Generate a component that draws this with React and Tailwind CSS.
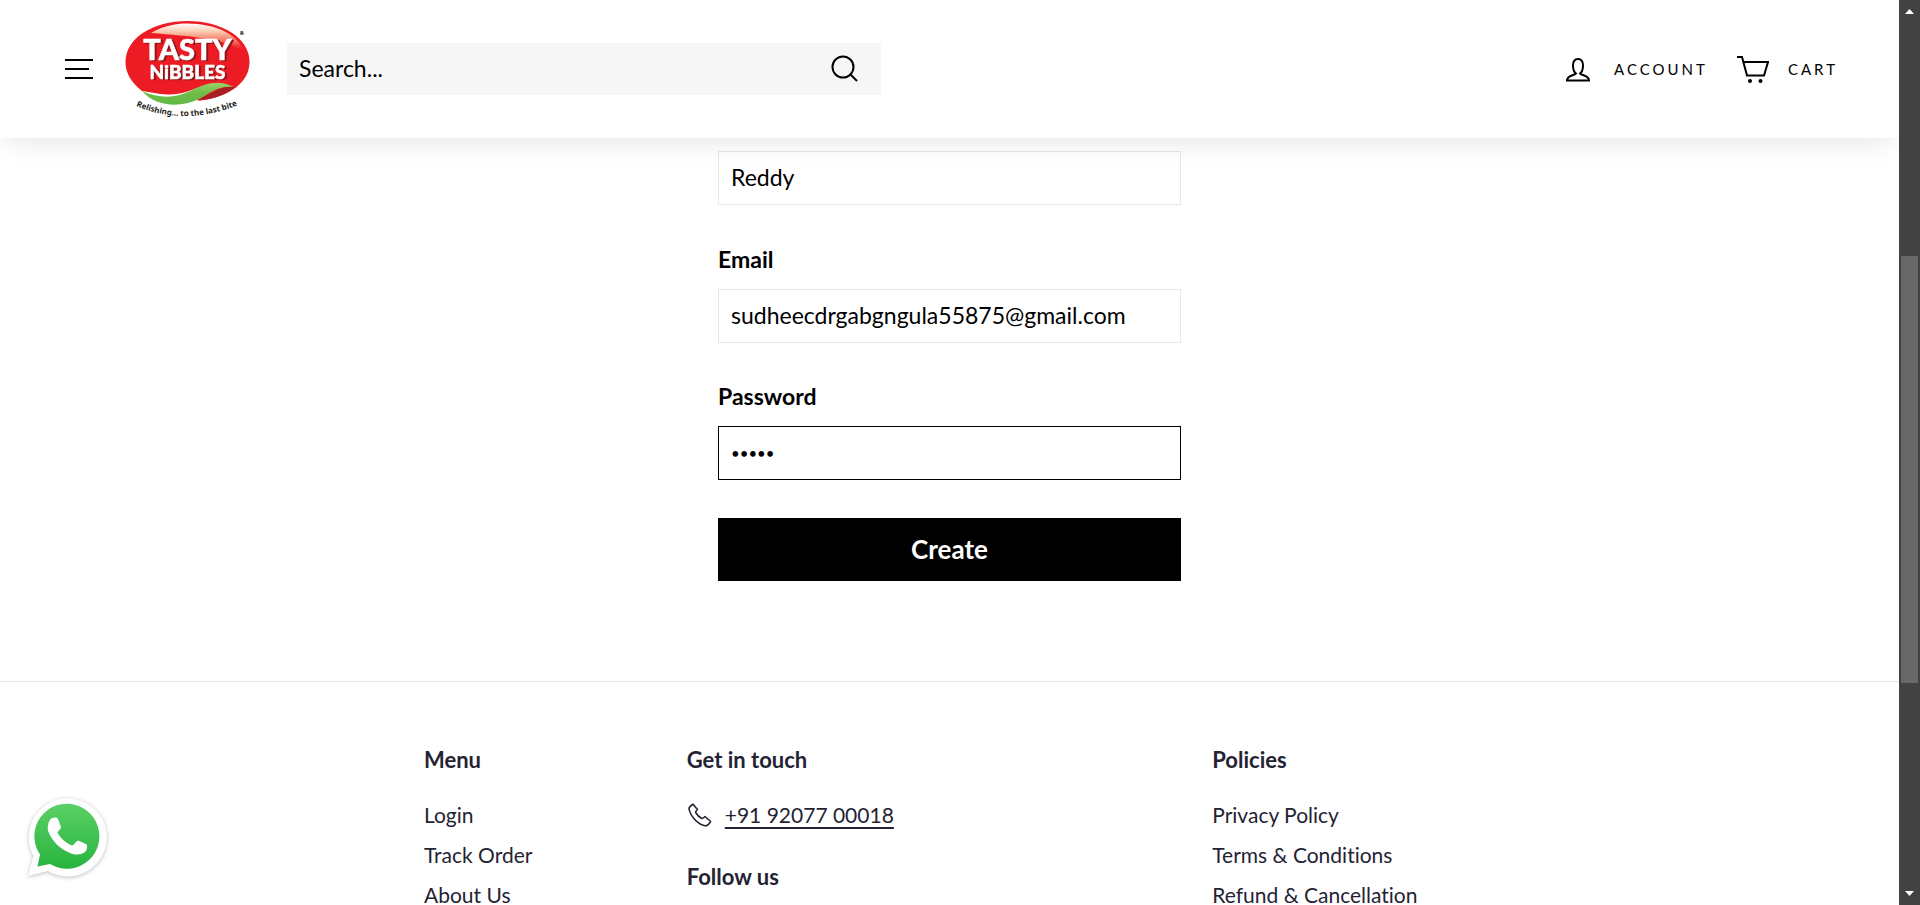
const menuLinks = ["Login", "Track Order", "About Us"];
const policyLinks = ["Privacy Policy", "Terms & Conditions", "Refund & Cancellation"];

function Logo() {
  return (
    <svg className="h-[106px] w-[128px]" viewBox="124 16 128 106" role="img" aria-label="Tasty Nibbles">
      <defs>
        <linearGradient id="gloss" x1="0.4" y1="0" x2="0.4" y2="1">
          <stop offset="0" stopColor="#fff" />
          <stop offset="0.3" stopColor="#fbc9b0" />
          <stop offset="0.65" stopColor="#f4836a" stopOpacity="0.850" />
          <stop offset="1" stopColor="#ed1c24" stopOpacity="0.200" />
        </linearGradient>
        <linearGradient id="leaf" x1="0" y1="0" x2="0" y2="1">
          <stop offset="0" stopColor="#9bd06a" />
          <stop offset="0.5" stopColor="#6cbd45" />
          <stop offset="1" stopColor="#5fb946" />
        </linearGradient>
        <path id="tagline" d="M136 106 Q188 128 245 102" />
      </defs>
      <path d="M187.500 21C222 21 249.500 38 249.500 62C249.500 82 230 97 200 100.500L142 91C132 83 125.500 74 125.500 62C125.500 38 153 21 187.500 21Z" fill="#ed1c24" />
      <path d="M151 33C163 26 175 23.500 187 23.500C217 23.500 240 36 243 51C225 39 190 36 151 33Z" fill="url(#gloss)" />
      <path d="M198 100.500C212 93 220 85 235 87C227 94 216 99 198 100.500Z" fill="#a81e22" />
      <path d="M142 91C156 95 172 96 186 92L200 87L196 98L170 103Z" fill="#fff" />
      <path d="M142 91C158 98 174 99 190 91C206 83 219 79 234 87C219 85 210 93 199 99C180 108 156 107 142 91Z" fill="url(#leaf)" />
      <g className="drop-shadow-[2px_1px_0_#8e1519]" fontFamily="Lato, sans-serif" fontWeight="900" textAnchor="middle" fill="#fff" stroke="#fff" strokeWidth="0.500">
        <text x="187.500" y="60" fontSize="29">TASTY</text>
        <text x="187.500" y="79" fontSize="19">NiBBLES</text>
      </g>
      <text x="240" y="35" fontSize="5" fontWeight="700" fontFamily="DejaVu Sans, sans-serif" fill="#222">R</text>
      <text fontSize="8" fontWeight="700" fontFamily="Noto Sans, sans-serif" fill="#222">
        <textPath href="#tagline" startOffset="0">Relishing... to the last bite</textPath>
      </text>
    </svg>
  );
}

function Header() {
  return (
    <header className="relative z-10 flex h-[138px] shrink-0 items-center bg-white pr-[61px] pl-[61px] shadow-[0_10px_25px_-6px_rgba(0,0,0,0.1)]">
      <button type="button" aria-label="Menu" className="p-1">
        <svg className="h-6 w-7" viewBox="0 0 28 24" stroke="#000" strokeWidth="2">
          <path d="M0 3H28M0 12H24M0 21H28" />
        </svg>
      </button>
      <a href="#home" className="ml-[27px]"><Logo /></a>
      <form className="ml-[35px] flex h-[52px] w-[594px] items-center bg-[#f6f6f6] pr-[23px] pb-0.5 pl-3" onSubmit={(e) => e.preventDefault()}>
        <input type="search" aria-label="Search" placeholder="Search..." className="min-w-0 flex-1 bg-transparent text-[23px] text-black outline-none placeholder:text-black" />
        <button type="submit" aria-label="Submit search">
          <svg className="size-7" viewBox="0 0 28 28" fill="none" stroke="#000" strokeWidth="2">
            <circle cx="13" cy="13" r="10.500" />
            <path d="M20.500 20.500L27 27" />
          </svg>
        </button>
      </form>
      <nav className="ml-auto flex items-center text-[15px] tracking-[3px] text-black">
        <a href="#account" className="flex items-center gap-6">
          <svg className="h-7 w-6" viewBox="0 0 24 28" fill="none" stroke="#000" strokeWidth="2">
            <path d="M10 18.500C7.800 17 7 13.500 7 10.500C7 6.500 8.500 4 12 4S17 6.500 17 10.500C17 13.500 16.200 17 14 18.500C15 20.500 23 20 23 25.500H1C1 20 9 20.500 10 18.500Z" />
          </svg>
          ACCOUNT
        </a>
        <a href="#cart" className="ml-[29px] flex items-center gap-[19px]">
          <svg className="h-7 w-8" viewBox="0 0 32 28" fill="none" stroke="#000" strokeWidth="2">
            <path d="M0 2H5L10 20.500H27L31 7H6.500" />
            <circle cx="13" cy="26" r="2" fill="#000" stroke="none" />
            <circle cx="23.500" cy="26" r="2" fill="#000" stroke="none" />
          </svg>
          CART
        </a>
      </nav>
    </header>
  );
}

const fieldClass = "block h-[54px] w-full border border-[#e8e8e1] px-3 pb-0.5 text-[23px] text-black outline-none";

function AccountForm() {
  return (
    <form className="mx-auto w-[463px] pt-[13px] pb-[100px]" onSubmit={(e) => e.preventDefault()}>
      <input aria-label="Last name" defaultValue="Reddy" className={fieldClass} />
      <label htmlFor="email" className="mt-10 mb-4 block text-[23px] leading-7 font-bold">Email</label>
      <input id="email" type="email" defaultValue="sudheecdrgabgngula55875@gmail.com" className={fieldClass} />
      <label htmlFor="password" className="mt-[39px] mb-4 block text-[23px] leading-7 font-bold">Password</label>
      <input id="password" type="password" defaultValue="12345" className="block h-[54px] w-full border border-black px-3 text-[15px] text-black outline-none" />
      <button type="submit" className="mt-[38px] block h-[63px] w-full bg-black text-[26px] font-bold text-white">Create</button>
    </form>
  );
}

function LinkColumn({ title, links }) {
  return (
    <div>
      <h2 className="text-[22px] leading-7 font-bold">{title}</h2>
      <ul className="mt-[21px] text-[21px] leading-10">
        {links.map((l) => (
          <li key={l}><a href="#">{l}</a></li>
        ))}
      </ul>
    </div>
  );
}

function Footer() {
  return (
    <footer className="border-t border-[#e8e8e1] pt-16 text-[#242333]">
      <div className="mx-auto grid max-w-[1051px] grid-cols-[1fr_2fr_1fr]">
        <LinkColumn title="Menu" links={menuLinks} />
        <div>
          <h2 className="text-[22px] leading-7 font-bold">Get in touch</h2>
          <a href="tel:+919207700018" className="mt-[21px] flex items-center gap-[13px] text-[21px] leading-10">
            <svg className="h-6 w-[25px]" viewBox="0 0 25 24" fill="none" stroke="currentColor" strokeWidth="1.600" strokeLinejoin="round">
              <path d="M6 1.200L10.500 6.500Q8 8.500 9 10Q11 13.500 14.500 15.200Q16 15.800 18 13.500L23.600 18.500Q21 23 18 22.800C11 21.500 3 13 2 5.500Q2.200 3.500 6 1.200Z" />
            </svg>
            <span className="underline decoration-2 underline-offset-4">+91 92077 00018</span>
          </a>
          <h2 className="mt-7 text-[22px] leading-7 font-bold">Follow us</h2>
        </div>
        <LinkColumn title="Policies" links={policyLinks} />
      </div>
    </footer>
  );
}

function WhatsAppButton() {
  return (
    <a href="#whatsapp" aria-label="WhatsApp" className="absolute bottom-[23px] left-6 z-20">
      <svg className="size-[88px]" viewBox="0 0 88 88">
        <defs>
          <linearGradient id="wa" x1="0" y1="0" x2="0" y2="1">
            <stop offset="0" stopColor="#5bd066" />
            <stop offset="1" stopColor="#27b43e" />
          </linearGradient>
        </defs>
        <path className="drop-shadow-[0_1px_2px_rgba(0,0,0,0.25)]" d="M4 82L9.500 62A39 39 0 1 1 24 77Z" fill="#fff" />
        <path d="M13.500 72.500L16 60.500A32.500 32.500 0 1 1 26 70Z" fill="url(#wa)" />
        <path d="M26 26C28 23 33 23 34 25L37 33C37 35 34 37 33.500 38.500C36 44 42 49 48 51.500C50 51 51.500 47.500 54 46.500L62 50C64 51 63 56 61.500 57.500C58 61 52 61.500 46 59C36 55 28 47 24.500 38C23 34 24 29 26 26Z" fill="#fff" />
      </svg>
    </a>
  );
}

function Scrollbar() {
  return (
    <div aria-hidden="true" className="flex w-[21px] shrink-0 flex-col items-center bg-[#424242] py-[9px]">
      <svg className="h-[5px] w-[9px]" viewBox="0 0 9 5"><path d="M4.500 0L9 5H0Z" fill="#fff" /></svg>
      <div className="flex w-full flex-1 flex-col px-[2px]">
        <div className="flex-[242]" />
        <div className="flex-[427] bg-[#686868]" />
        <div className="flex-[208]" />
      </div>
      <svg className="h-[5px] w-[9px]" viewBox="0 0 9 5"><path d="M0 0H9L4.500 5Z" fill="#fff" /></svg>
    </div>
  );
}

export default function App() {
  return (
    <div className="flex h-screen overflow-hidden bg-white font-[Lato,sans-serif] text-black [font-variant-ligatures:none]">
      <div className="relative flex min-w-0 flex-1 flex-col overflow-hidden">
        <Header />
        <main className="shrink-0"><AccountForm /></main>
        <Footer />
        <WhatsAppButton />
      </div>
      <Scrollbar />
    </div>
  );
}
